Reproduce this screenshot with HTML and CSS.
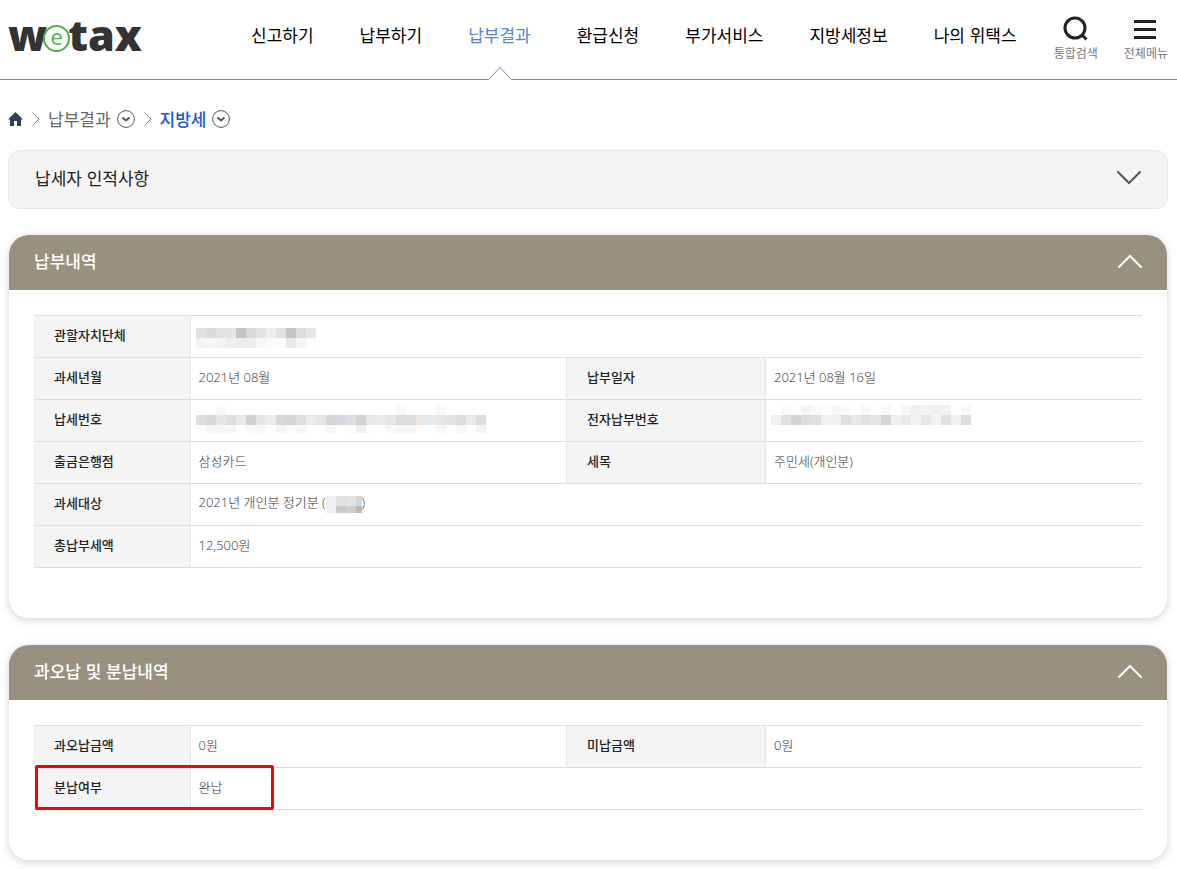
FILE: index.html
```html
<!DOCTYPE html>
<html lang="ko">
<head>
<meta charset="utf-8">
<meta name="viewport" content="width=device-width, initial-scale=1">
<title>wetax</title>
<link rel="stylesheet" href="styles.css">
</head>
<body>
<header class="header">
  <a class="logo" href="#" aria-label="wetax"><span>w</span><span class="logo-e">e</span><span>tax</span></a>
  <nav class="nav">
    <a href="#">신고하기</a>
    <a href="#">납부하기</a>
    <a href="#" class="active" aria-current="page">납부결과<svg class="notch" width="24" height="14" viewBox="0 0 24 14"><path d="M0 14 12 1l12 13z" fill="#fff"/><path d="M.5 13.5 12 1.5l11.500 12" fill="none" stroke="#7c84a3"/></svg></a>
    <a href="#">환급신청</a>
    <a href="#">부가서비스</a>
    <a href="#">지방세정보</a>
    <a href="#">나의 위택스</a>
  </nav>
  <div class="tools">
    <button type="button"><svg width="26" height="26" viewBox="0 0 26 26" fill="none" stroke="#222" stroke-width="3"><circle cx="12" cy="12" r="10"/><path d="m18.500 18.500 5 5"/></svg>통합검색</button>
    <button type="button"><svg width="26" height="26" viewBox="0 0 26 26" stroke="#222" stroke-width="3"><path d="M1 5.500h22M1 13.500h22M1 21.500h22"/></svg>전체메뉴</button>
  </div>
</header>
<main class="main">
  <nav class="crumbs" aria-label="breadcrumb">
    <a href="#" aria-label="홈"><svg width="15" height="14" viewBox="0 0 15 14"><path d="M7.500 0 15 7.500h-2V14H9V9H6v5H2V7.500H0z" fill="#2f3a55"/></svg></a>
    <svg class="sep" width="8" height="14" viewBox="0 0 8 14"><path d="m.5.5 6.500 6.500-6.500 6.500" fill="none" stroke="#888"/></svg>
    <a href="#">납부결과</a>
    <button type="button" aria-label="납부결과 메뉴"><svg width="18" height="18" viewBox="0 0 18 18" fill="none" stroke="#555"><circle cx="9" cy="9" r="8.400"/><path d="m5.500 7.500 3.500 3 3.500-3" stroke-width="2"/></svg></button>
    <svg class="sep" width="8" height="14" viewBox="0 0 8 14"><path d="m.5.5 6.500 6.500-6.500 6.500" fill="none" stroke="#888"/></svg>
    <a href="#" class="here">지방세</a>
    <button type="button" aria-label="지방세 메뉴"><svg width="18" height="18" viewBox="0 0 18 18" fill="none" stroke="#555"><circle cx="9" cy="9" r="8.400"/><path d="m5.500 7.500 3.500 3 3.500-3" stroke-width="2"/></svg></button>
  </nav>

  <button type="button" class="folded" aria-expanded="false">납세자 인적사항<svg width="24" height="14" viewBox="0 0 24 14"><path d="m1 1 11 11L23 1" fill="none" stroke="#555" stroke-width="2" stroke-linecap="round"/></svg></button>

  <section class="panel">
    <h2><button type="button" class="panel-head" aria-expanded="true">납부내역<svg width="24" height="14" viewBox="0 0 24 14"><path d="m1 13 11-11 11 11" fill="none" stroke="#fff" stroke-width="2" stroke-linecap="round"/></svg></button></h2>
    <div class="panel-body">
      <table>
        <colgroup><col class="c-label"><col><col class="c-label2"><col></colgroup>
        <tbody>
        <tr><th scope="row">관할자치단체</th><td colspan="3"><svg class="mask" width="120" height="26" viewBox="0 -6 120 26" shape-rendering="crispEdges" data-m="e2e1e0 dadada e3e2e5 e3e5e7 c5c4c3 d9dade e4e5e0 edefee e5e2dd c4c5c4 dcdcdc e5e8e8|f3f3f3 f4f6f5 f3f3f3 eeeeef eeecec edeef1 f6f8f7 fafaf8 fbf9fa e8e8e8 f5f5f5 fcfefe"></svg></td></tr>
        <tr><th scope="row">과세년월</th><td>2021년 08월</td><th scope="row" class="second">납부일자</th><td>2021년 08월 16일</td></tr>
        <tr><th scope="row">납세번호</th><td><svg class="mask" width="290" height="28" shape-rendering="crispEdges" data-m="- - f9f9f9 - - - - - - - - - - - - - - - - - f9f9f9 - - - f9f9f9 - - - -|dfdfdd d8d8d8 e5e8e6 dfdddd e7eaec d0d0ce e5e5e3 ececee d9d7d9 d5d5d7 dedede ececea e5e5e3 d7d6d3 d5d8de e0dee0 d3d2d4 e7e9ec ecebea e5e5e3 dadce0 dddddb eee7e4 e5eaee e7e7e7 e4e4e2 dcdcda e9e9e9 dcdce2|fdfdfd f6f6f6 f6f6f6 f6f6f6 - fcf8f7 f6f9fc - f5f5f5 fbfbfb f6f6f6 - - f7f7f7 - fcfcf9 f1f1f1 fdfdfd - f8f8f5 f5f5f5 f5f5f5 - - f7f7f7 - f7f7f7 - f5f5f5"></svg></td><th scope="row" class="second">전자납부번호</th><td><svg class="mask" width="200" height="28" shape-rendering="crispEdges" data-m="- fafafb fdfdfd f4f4f2 f9fbfa fdfdfd f8f8f8 fbfcfa - f8f8fa fdfdfd f8f8f8 - f6f6f3 eef0ef f3f3f3 eef0f0 f1f3f3 - f8f8f8|f1f0ee dfe0df d5d4d2 dcdee1 e2e1e2 f1f1ef f0f0ee dedfdb e7e9eb e3e1e5 e5e7e9 d5d5d5 f1f1f0 ebe9e6 f2f2f3 e5e7e6 f3f3f1 e3e1df eef0ee dbdce0"></svg></td></tr>
        <tr><th scope="row">출금은행점</th><td>삼성카드</td><th scope="row" class="second">세목</th><td>주민세(개인분)</td></tr>
        <tr><th scope="row">과세대상</th><td colspan="3">2021년 개인분 정기분 (<svg class="mask-inline" width="36" height="17" shape-rendering="crispEdges" data-m="f0f0f1 e1e0de e2e3e5 d6d7d8|eeeeef c9c9c5 d0cfcd b8b9bb"></svg>)</td></tr>
        <tr><th scope="row">총납부세액</th><td colspan="3">12,500원</td></tr>
        </tbody>
      </table>
    </div>
  </section>

  <section class="panel">
    <h2><button type="button" class="panel-head" aria-expanded="true">과오납 및 분납내역<svg width="24" height="14" viewBox="0 0 24 14"><path d="m1 13 11-11 11 11" fill="none" stroke="#fff" stroke-width="2" stroke-linecap="round"/></svg></button></h2>
    <div class="panel-body">
      <table>
        <colgroup><col class="c-label"><col><col class="c-label2"><col></colgroup>
        <tbody>
        <tr><th scope="row">과오납금액</th><td>0원</td><th scope="row" class="second">미납금액</th><td>0원</td></tr>
        <tr><th scope="row">분납여부</th><td colspan="3">완납</td></tr>
        </tbody>
      </table>
      <div class="highlight"></div>
    </div>
  </section>
</main>
<script src="mask.js"></script>
</body>
</html>
```
FILE: styles.css
```css
* { box-sizing: border-box; }
body {
  margin: 0;
  background: #fff;
  color: #222;
  font-family: "Noto Sans CJK KR", "Noto Sans", sans-serif;
}
a { color: inherit; text-decoration: none; }
button { font: inherit; color: inherit; border: 0; background: none; padding: 0; cursor: pointer; }
svg { flex: none; }

.header {
  display: flex;
  align-items: stretch;
  height: 80px;
  padding: 0 9px 0 8px;
  border-bottom: 1px solid #7c84a3;
}
.logo {
  display: flex;
  align-items: center;
  width: 132px;
  height: 70px;
  font: 800 43px/70px "Open Sans", "Noto Sans", sans-serif;
  color: #333;
}
.logo-e {
  flex: none;
  width: 27px;
  height: 27px;
  margin: 6px -2px 0 -4px;
  border: 2px solid #4cb04a;
  border-radius: 50%;
  background: #fff;
  color: #4cb04a;
  font-size: 22px;
  font-weight: 400;
  line-height: 19px;
  text-align: center;
}
.nav {
  display: flex;
  flex: 1;
  gap: 46px;
  margin-left: 111px;
  font-size: 17px;
  line-height: 70px;
  color: #000;
  white-space: nowrap;
}
.nav .active { position: relative; color: #5584cf; }
.notch { position: absolute; left: 20px; bottom: -1px; }
.tools { display: flex; gap: 26px; padding-top: 16px; }
.tools button {
  display: flex;
  flex-direction: column;
  align-items: center;
  height: 50px;
  font-size: 12px;
  line-height: 22px;
  color: #777;
  white-space: nowrap;
}

.main { padding: 0 9px 9px 8px; }
.crumbs {
  display: flex;
  align-items: center;
  height: 70px;
  padding-top: 8px;
  font-size: 17px;
  line-height: 24px;
  color: #666;
}
.crumbs a, .crumbs button { display: flex; }
.crumbs .sep { margin: 0 8px 0 9px; }
.crumbs button { margin-left: 6px; }
.crumbs .here { color: #1859d8; font-weight: 500; }

.folded, .panel-head {
  display: flex;
  justify-content: space-between;
  align-items: center;
  width: 100%;
  font-size: 17px;
  line-height: 24px;
  text-align: left;
}
.folded {
  height: 59px;
  padding: 0 26px 4px;
  border: 1px solid #e8e8e8;
  border-radius: 12px;
  background: #f4f4f4;
}
.panel {
  margin: 26px 1px 27px;
  border-radius: 20px;
  box-shadow: 0 2px 10px rgba(0, 0, 0, .18);
  overflow: hidden;
}
.panel + .panel { margin-bottom: 0; }
.panel h2 { margin: 0; }
.panel-head {
  height: 55px;
  padding: 0 25px 3px;
  background: #9a907f;
  color: #fff;
  font-weight: 500;
}
.panel-body { position: relative; padding: 25px 25px 50px; }

table { width: 100%; table-layout: fixed; border-collapse: collapse; }
.c-label { width: 156px; }
.c-label2 { width: 199px; }
tr { border-top: 1px solid #dedede; border-bottom: 1px solid #dedede; }
th, td { height: 42px; font-size: 13px; line-height: 20px; text-align: left; }
th {
  padding: 0 0 4px 20px;
  border-right: 1px solid #e6e6e6;
  background: #f4f4f4;
  color: #222;
  font-weight: 500;
}
th.second { border-left: 1px solid #e6e6e6; }
td {
  padding: 0 8px 4px;
  color: #333;
  font-family: "Open Sans", "Noto Sans CJK KR", sans-serif;
  font-weight: 300;
}
.mask { display: block; margin-left: -3px; }
.mask-inline { vertical-align: middle; }
.highlight {
  position: absolute;
  left: 26px;
  top: 65px;
  width: 239px;
  height: 45px;
  border: 3px solid #f00;
  border-radius: 2px;
}
```
FILE: mask.js
```js
// Fills each masked value with a grid of coloured 10px cells; rows are separated by "|".
var CELL = 10;
document.querySelectorAll("svg[data-m]").forEach(function (svg) {
  svg.dataset.m.split("|").forEach(function (row, y) {
    row.split(" ").forEach(function (c, x) {
      if (c === "-") return;
      var r = document.createElementNS("http://www.w3.org/2000/svg", "rect");
      r.setAttribute("x", x * CELL);
      r.setAttribute("y", y * CELL);
      r.setAttribute("width", CELL);
      r.setAttribute("height", CELL);
      r.setAttribute("fill", "#" + c);
      svg.appendChild(r);
    });
  });
});
```
